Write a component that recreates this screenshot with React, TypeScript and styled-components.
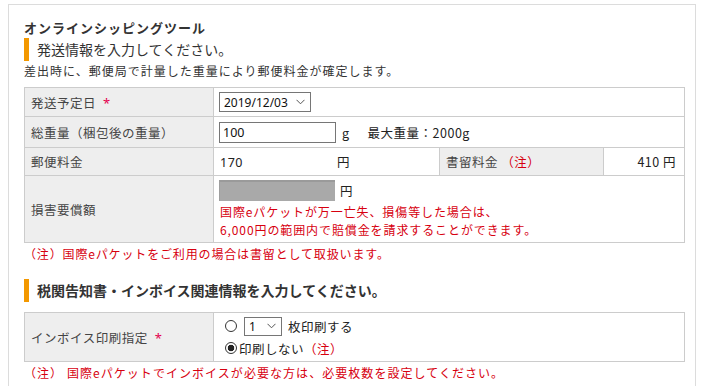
import React from "react";
import styled, { createGlobalStyle } from "styled-components";

const Global = createGlobalStyle`
  html, body { margin: 0; padding: 0; background: #fff; }
  body {
    font-family: "Noto Sans CJK JP", "Noto Sans", sans-serif;
    color: #333;
    font-size: 12px;
  }
`;

const Page = styled.div`
  padding: 4px 8px 0 8px;
`;

const Panel = styled.div`
  border: 1px solid #dcdcdc;
  border-bottom: none;
  padding: 14px 11px 0 15px;
  height: 400px;
  box-sizing: border-box;
`;

const Title = styled.div`
  font-size: 13px;
  font-weight: bold;
  line-height: 18px;
  letter-spacing: 1px;
  color: #333;
`;

const Heading = styled.div<{ $mt: number; $bold?: boolean }>`
  display: flex;
  align-items: center;
  margin-top: ${(p) => p.$mt}px;
  height: 23px;
  border-left: 5px solid #f39800;
  padding-left: 8px;
  font-size: 14px;
  line-height: 23px;
  color: #333;
  font-weight: ${(p) => (p.$bold ? "bold" : "normal")};
  letter-spacing: ${(p) => (p.$bold ? "0px" : "0px")};
`;

const Desc = styled.div`
  margin-top: 1px;
  line-height: 18px;
  font-size: 12px;
  letter-spacing: 1px;
`;

const Table = styled.table<{ $mt: number }>`
  margin-top: ${(p) => p.$mt}px;
  border-collapse: collapse;
  width: 660px;
  table-layout: fixed;
  font-size: 12.5px;
  td {
    border: 1px solid #cccccc;
    padding: 0 6px;
    letter-spacing: 0.5px;
  }
`;

const Label = styled.td`
  background: #eeeeee;
  color: #444;
`;

const Value = styled.td`
  background: #fff;
  color: #222;
`;

const Req = styled.span`
  color: #e4004f;
  margin-left: 7px;
  font-family: "Noto Sans", sans-serif;
  font-size: 13px;
`;

const Red = styled.span`
  color: #d7000f;
`;

const Row = styled.tr<{ $h: number }>`
  height: ${(p) => p.$h}px;
`;

const Line = styled.div`
  display: flex;
  align-items: center;
`;

const SelectWrap = styled.span<{ $w: number; $h: number; $ml: number; $mr: number }>`
  position: relative;
  display: inline-flex;
  width: ${(p) => p.$w}px;
  height: ${(p) => p.$h}px;
  margin-left: ${(p) => p.$ml}px;
  margin-right: ${(p) => p.$mr}px;
  svg {
    position: absolute;
    right: 6px;
    top: 50%;
    margin-top: -3px;
    pointer-events: none;
  }
`;

const NativeSelect = styled.select`
  appearance: none;
  -webkit-appearance: none;
  width: 100%;
  height: 100%;
  box-sizing: border-box;
  font-family: "Noto Sans", "Noto Sans CJK JP", sans-serif;
  font-size: 12px;
  border: 1px solid #767676;
  border-radius: 0;
  padding: 0 4px;
  color: #111;
  background: #fff;
  outline: none;
`;

const Chevron = () => (
  <svg width="9" height="6" viewBox="0 0 9 6">
    <path d="M0.5 0.8 L4.5 4.8 L8.5 0.8" fill="none" stroke="#555" strokeWidth="1" />
  </svg>
);

const TextBox = styled.input`
  width: 117px;
  height: 21px;
  box-sizing: border-box;
  margin-left: -1px;
  border: 1px solid #767676;
  padding: 0 3px;
  font-family: "Noto Sans", sans-serif;
  font-size: 12.5px;
  color: #111;
  outline: none;
`;

const Disabled = styled.div`
  width: 116px;
  height: 21px;
  box-sizing: border-box;
  margin-left: -1px;
  background: #a9a9a9;
  border-top: 2px solid #9a9a9a;
  border-left: 1px solid #9e9e9e;
`;

const Unit = styled.span<{ $ml: number }>`
  margin-left: ${(p) => p.$ml}px;
`;

const Amount = styled.span`
  display: inline-block;
  width: 117px;
  font-family: "Noto Sans", sans-serif;
  font-size: 12.5px;
`;

const Right = styled.div`
  text-align: right;
  padding-right: 2px;
`;

const RedLines = styled.div`
  color: #d7000f;
  line-height: 18px;
  margin-top: 2px;
  font-size: 12px;
  letter-spacing: 0.9px;
`;

const Note = styled.div<{ $mt: number; $ls: number }>`
  margin-top: ${(p) => p.$mt}px;
  color: #d7000f;
  line-height: 18px;
  font-size: 12px;
  letter-spacing: ${(p) => p.$ls}px;
`;

const Radio = styled.input<{ $ml: number; $mr: number }>`
  appearance: none;
  -webkit-appearance: none;
  box-sizing: border-box;
  width: 12px;
  height: 12px;
  margin: 0 ${(p) => p.$mr}px 0 ${(p) => p.$ml}px;
  border: 1px solid #333;
  border-radius: 50%;
  background: #fff;
  &:checked {
    background: radial-gradient(circle, #222 0, #222 3px, #fff 3.6px);
  }
`;

export default function App() {
  return (
    <Page>
      <Global />
      <Panel>
        <Title>オンラインシッピングツール</Title>
        <Heading $mt={1}>発送情報を入力してください。</Heading>
        <Desc>差出時に、郵便局で計量した重量により郵便料金が確定します。</Desc>
        <Table $mt={7}>
          <colgroup>
            <col style={{ width: 189 }} />
            <col style={{ width: 226 }} />
            <col style={{ width: 164 }} />
            <col style={{ width: 81 }} />
          </colgroup>
          <tbody>
            <Row $h={29}>
              <Label>
                発送予定日<Req>*</Req>
              </Label>
              <Value colSpan={3}>
                <Line>
                  <SelectWrap $w={92} $h={20} $ml={-1} $mr={0}>
                    <NativeSelect defaultValue="2019/12/03">
                      <option>2019/12/03</option>
                    </NativeSelect>
                    <Chevron />
                  </SelectWrap>
                </Line>
              </Value>
            </Row>
            <Row $h={31}>
              <Label>総重量（梱包後の重量）</Label>
              <Value colSpan={3}>
                <Line>
                  <TextBox defaultValue="100" />
                  <Unit $ml={6}>g</Unit>
                  <Unit $ml={18}>最大重量：2000g</Unit>
                </Line>
              </Value>
            </Row>
            <Row $h={28}>
              <Label>郵便料金</Label>
              <Value>
                <Amount>170</Amount>円
              </Value>
              <Label>
                書留料金 <Red>（注）</Red>
              </Label>
              <Value>
                <Right>410 円</Right>
              </Value>
            </Row>
            <Row $h={67}>
              <Label>損害要償額</Label>
              <Value colSpan={3}>
                <Line>
                  <Disabled />
                  <Unit $ml={5}>円</Unit>
                </Line>
                <RedLines>
                  国際eパケットが万一亡失、損傷等した場合は、
                  <br />
                  6,000円の範囲内で賠償金を請求することができます。
                </RedLines>
              </Value>
            </Row>
          </tbody>
        </Table>
        <Note $mt={2} $ls={0.85}>（注）国際eパケットをご利用の場合は書留として取扱います。</Note>
        <Heading $mt={16} $bold>
          税関告知書・インボイス関連情報を入力してください。
        </Heading>
        <Table $mt={10}>
          <colgroup>
            <col style={{ width: 189 }} />
            <col style={{ width: 471 }} />
          </colgroup>
          <tbody>
            <Row $h={49}>
              <Label>
                インボイス印刷指定<Req>*</Req>
              </Label>
              <Value>
                <Line>
                  <Radio type="radio" name="inv" $ml={5} $mr={7} />
                  <SelectWrap $w={38} $h={19} $ml={0} $mr={6}>
                    <NativeSelect defaultValue="1">
                      <option>1</option>
                    </NativeSelect>
                    <Chevron />
                  </SelectWrap>
                  枚印刷する
                </Line>
                <Line style={{ marginTop: 3 }}>
                  <Radio type="radio" name="inv" defaultChecked $ml={5} $mr={2} />
                  印刷しない <Red>（注）</Red>
                </Line>
              </Value>
            </Row>
          </tbody>
        </Table>
        <Note $mt={2} $ls={1.05}>（注） 国際eパケットでインボイスが必要な方は、必要枚数を設定してください。</Note>
      </Panel>
    </Page>
  );
}
